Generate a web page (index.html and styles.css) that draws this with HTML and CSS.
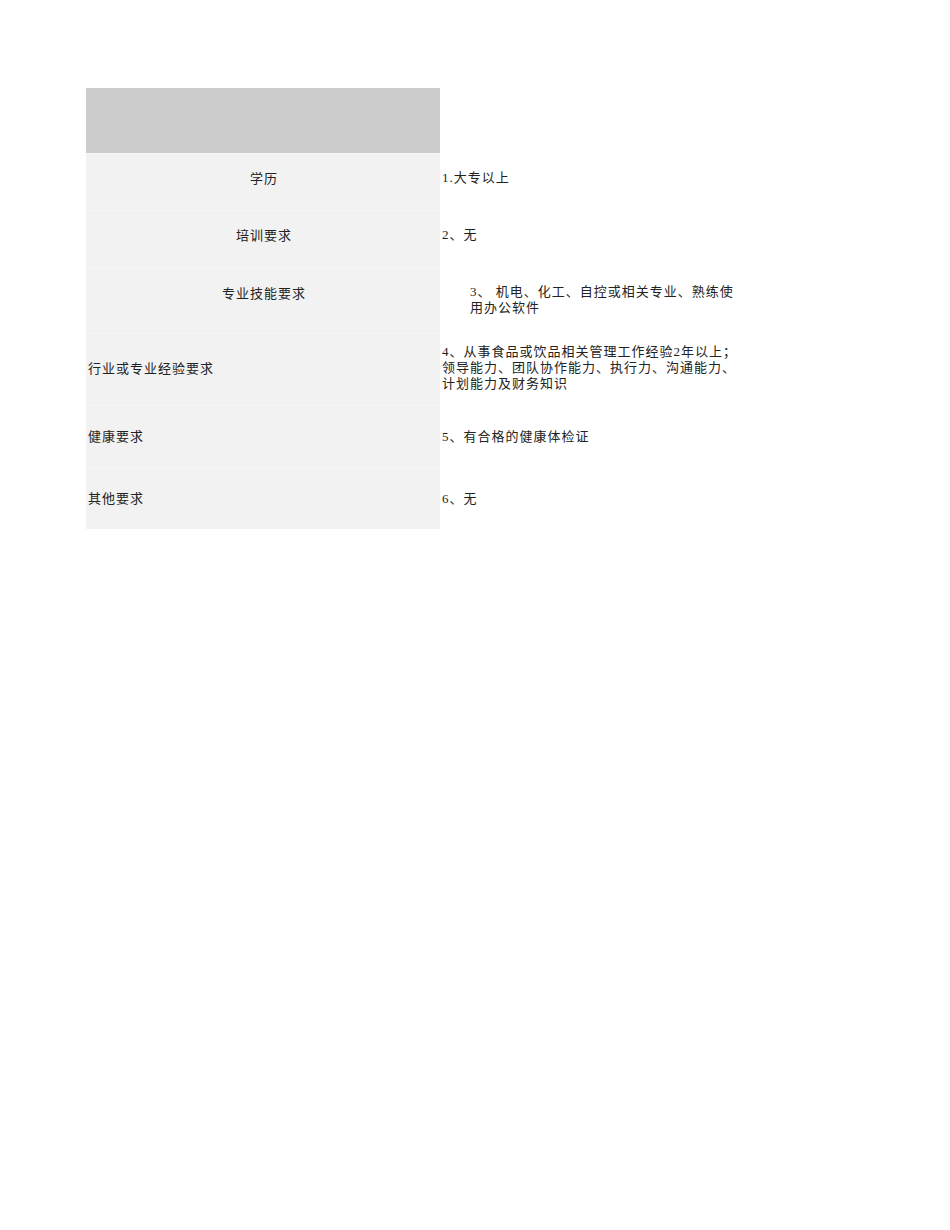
FILE: index.html
```html
<!DOCTYPE html>
<html lang="zh-CN">
<head>
<meta charset="utf-8">
<title>岗位要求</title>
<link rel="stylesheet" href="styles.css">
</head>
<body>
<div class="sheet">
  <div class="row row-head">
    <div class="cell label head"></div>
    <div class="cell value"></div>
  </div>
  <div class="row r1">
    <div class="cell label center">学历</div>
    <div class="cell value">1.大专以上</div>
  </div>
  <div class="row r2">
    <div class="cell label center">培训要求</div>
    <div class="cell value">2、无</div>
  </div>
  <div class="row r3">
    <div class="cell label center up">专业技能要求</div>
    <div class="cell value indent">3、 机电、化工、自控或相关专业、熟练使用办公软件</div>
  </div>
  <div class="row r4">
    <div class="cell label">行业或专业经验要求</div>
    <div class="cell value">4、从事食品或饮品相关管理工作经验2年以上；领导能力、团队协作能力、执行力、沟通能力、计划能力及财务知识</div>
  </div>
  <div class="row r5">
    <div class="cell label">健康要求</div>
    <div class="cell value">5、有合格的健康体检证</div>
  </div>
  <div class="row r6">
    <div class="cell label">其他要求</div>
    <div class="cell value">6、无</div>
  </div>
</div>
</body>
</html>
```
FILE: styles.css
```css
html, body {
  margin: 0;
  padding: 0;
  background: #ffffff;
}
body {
  font-family: "Liberation Serif", "Noto Sans CJK SC", serif;
  font-size: 13px;
  letter-spacing: 1px;
  line-height: 16px;
  color: #222222;
}
.sheet {
  padding: 88px 0 0 86px;
  display: flex;
  flex-direction: column;
  width: 654px;
}
.row {
  display: grid;
  grid-template-columns: 354px 300px;
}
.cell {
  display: flex;
  align-items: center;
  box-sizing: border-box;
}
.label {
  background: #f2f2f2;
  padding-left: 2px;
  border-top: 1px solid #f6f6f6;
}
.label.head {
  background: #cccccc;
  border-top: none;
}
.center {
  justify-content: center;
}
.value {
  padding-left: 2px;
}
.indent {
  padding-left: 30px;
  padding-right: 4px;
}
.row-head { height: 65px; }
.r1 { height: 57px; }
.r2 { height: 57px; }
.r3 { height: 66px; }
.r4 { height: 72px; }
.r5 { height: 63px; }
.r6 { height: 61px; }
.r1 .cell { padding-bottom: 7px; }
.r2 .cell { padding-bottom: 7px; }
.r3 .up { padding-bottom: 14px; }
.r4 .cell { padding-bottom: 2px; }
```
